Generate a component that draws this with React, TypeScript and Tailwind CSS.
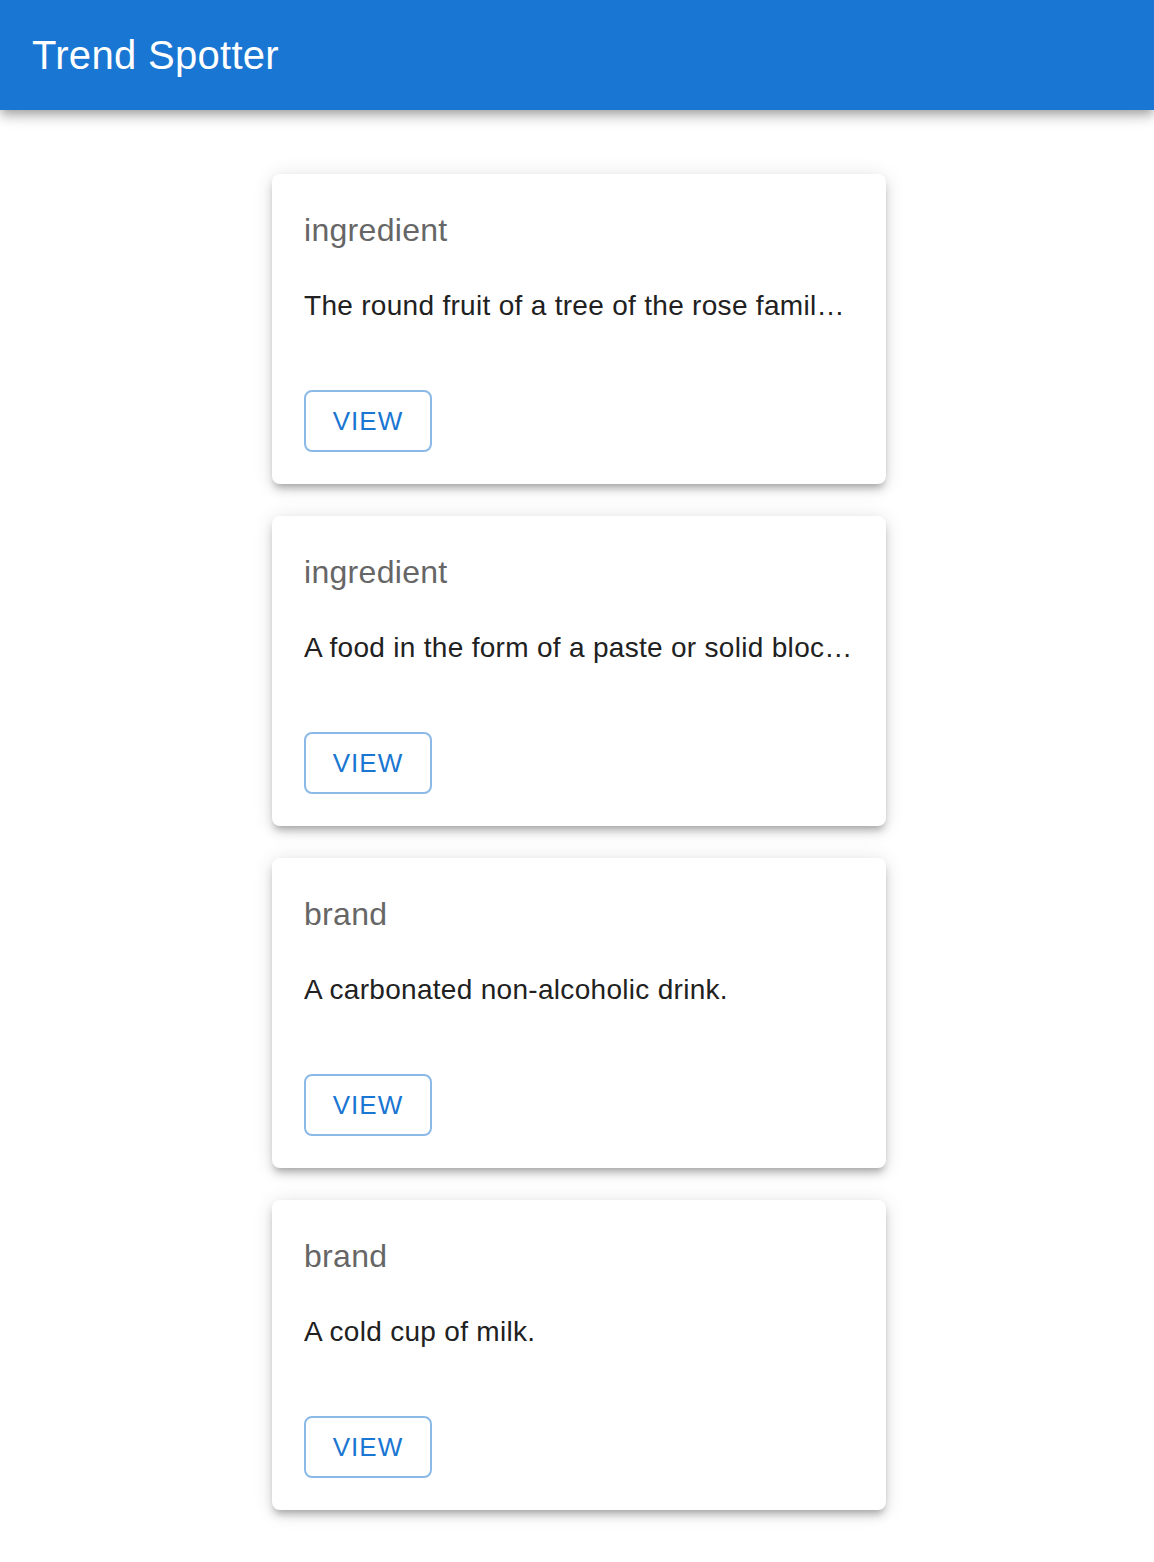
const trends = [
  {
    category: "ingredient",
    description: "The round fruit of a tree of the rose famil…",
  },
  {
    category: "ingredient",
    description: "A food in the form of a paste or solid bloc…",
  },
  {
    category: "brand",
    description: "A carbonated non-alcoholic drink.",
  },
  {
    category: "brand",
    description: "A cold cup of milk.",
  },
];

const TrendCard = ({ category, description }: { category: string; description: string }) => {
  return (
    <div className="bg-white rounded-[8px] p-8 shadow-[0_6px_6px_-4px_rgba(0,0,0,0.2),0_6px_8px_0_rgba(0,0,0,0.14),0_2px_20px_0_rgba(0,0,0,0.12)]">
      <div className="text-[32px] leading-[48px] tracking-[0.3px] text-[#666666]">{category}</div>
      <div className="mt-8 text-[28px] leading-[40px] tracking-[0.3px] text-[#212121] whitespace-nowrap">
        {description}
      </div>
      <button className="mt-16 w-[128px] h-[62px] border-2 border-[#8cbae8] rounded-[8px] text-[#1976d2] text-[26px] tracking-[1px] uppercase">
        View
      </button>
    </div>
  );
};

const App = () => {
  return (
    <div className="min-h-[1562px] bg-white font-['Liberation_Sans',Arial,sans-serif]">
      <header className="h-[110px] bg-[#1976d2] flex items-center px-8 shadow-[0_4px_8px_-2px_rgba(0,0,0,0.2),0_8px_10px_0_rgba(0,0,0,0.14),0_2px_20px_0_rgba(0,0,0,0.12)] relative">
        <h1 className="text-white text-[40px] leading-[64px] tracking-[0.3px]">Trend Spotter</h1>
      </header>
      <main className="pl-1 pt-16 pb-16">
        <div className="mx-auto w-[614px] flex flex-col gap-8">
          {trends.map((t, i) => (
            <TrendCard key={i} category={t.category} description={t.description} />
          ))}
        </div>
      </main>
    </div>
  );
};

export default App;
